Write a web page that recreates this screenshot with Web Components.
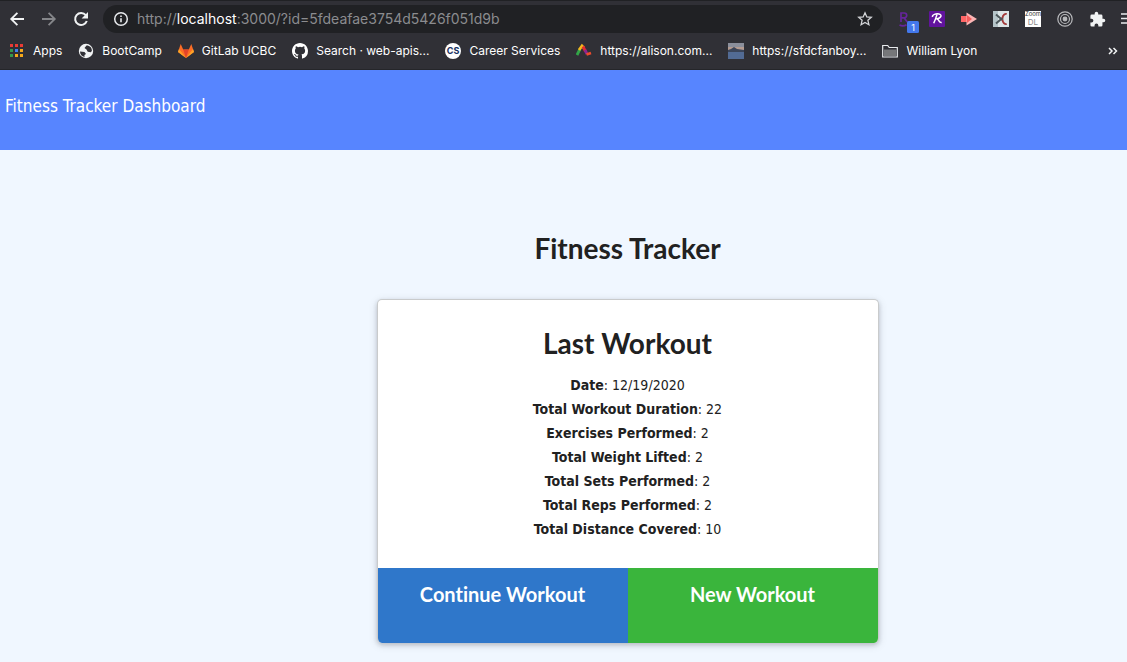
<!DOCTYPE html>
<html lang="en">
<head>
<meta charset="utf-8">
<title>Fitness Tracker Dashboard</title>
<style>
html, body { margin: 0; min-height: 100%; }
body { background: #f0f7ff; color: #212121; font: 14px/24px "DejaVu Sans Condensed", "Noto Sans", sans-serif; font-variant-ligatures: none; overflow-x: hidden; }
</style>
</head>
<body>
<browser-chrome></browser-chrome>
<site-nav><a href="#dashboard">Fitness Tracker Dashboard</a></site-nav>
<workout-page></workout-page>

<script>
const define = (name, html) => {
  const t = document.createElement('template');
  t.innerHTML = html;
  customElements.define(name, class extends HTMLElement {
    constructor() {
      super();
      this.attachShadow({ mode: 'open' }).append(t.content.cloneNode(true));
    }
  });
};

define('tool-button', `
<style>
:host { display: flex; flex: none; width: 32px; height: 28px; }
button { all: unset; display: flex; align-items: center; justify-content: center; width: 100%; cursor: pointer; }
</style>
<button type="button"><slot></slot></button>`);

define('address-bar', `
<style>
:host { display: flex; flex: 1; min-width: 0; align-items: center; height: 28px; padding: 0 10px; gap: 8px;
  box-sizing: border-box; border-radius: 14px; background: #202124; color: #8b8c8f; font: 14px/20px Inter, sans-serif; }
svg { flex: none; }
.url { flex: 1; min-width: 0; white-space: nowrap; overflow: hidden; }
b { font-weight: 400; color: #fff; }
</style>
<svg width="16" height="16" viewBox="0 0 16 16"><circle cx="8" cy="8" r="6.3" fill="none" stroke="#e8eaed" stroke-width="1.5"/><path d="M7.2 7.2h1.6v4H7.2zM7.2 4.4h1.6V6H7.2z" fill="#e8eaed"/></svg>
<div class="url">http://<b>localhost</b>:3000/?id=5fdeafae3754d5426f051d9b</div>
<svg width="16" height="16" viewBox="0 0 16 16"><path d="M8 1.8l1.8 4.1 4.5.4-3.4 3 1 4.4L8 11.4l-3.9 2.3 1-4.4-3.4-3 4.5-.4z" fill="none" stroke="#d4d6d9" stroke-width="1.3"/></svg>`);

define('book-mark', `
<style>
:host { display: block; flex: none; }
a { display: flex; align-items: center; gap: 8px; color: #fff; text-decoration: none; font: 12px/16px Inter, sans-serif; white-space: nowrap; }
::slotted(svg) { display: block; width: 16px; height: 16px; }
</style>
<a href="#"><slot name="icon"></slot><span><slot></slot></span></a>`);

define('browser-chrome', `
<style>
:host { display: block; height: 70px; overflow: hidden; background: #303036; border-top: 1px solid #202124; border-bottom: 1px solid #25262a; box-sizing: border-box; }
.tools { display: flex; align-items: center; margin: 4px -18px 0 1px; }
address-bar { margin: 0 6px; }
.marks { display: flex; align-items: center; gap: 16px; padding: 0 9px; height: 36px; }
.more { margin-left: auto; width: 10px; }
</style>
<div class="tools">
<tool-button aria-label="Back"><svg width="16" height="16" viewBox="0 0 16 16" fill="none" stroke="#f1f3f4" stroke-width="1.8"><path d="M15 8H2.5M8.4 1.8L2.2 8l6.2 6.2"/></svg></tool-button>
<tool-button aria-label="Forward"><svg width="16" height="16" viewBox="0 0 16 16" fill="none" stroke="#85868a" stroke-width="1.8"><path d="M1 8h12.5M7.6 1.8L13.8 8l-6.2 6.2"/></svg></tool-button>
<tool-button aria-label="Reload"><svg width="16" height="16" viewBox="0 0 16 16"><path d="M12.8 4.2A6 6 0 1 0 13.8 10" fill="none" stroke="#f1f3f4" stroke-width="2"/><path d="M15 1v6.4H8.6z" fill="#f1f3f4"/></svg></tool-button>
<address-bar></address-bar>
<tool-button aria-label="R extension"><svg width="32" height="28" viewBox="0 0 32 28"><path d="M12 17V8h3.300a2.400 2.400 0 0 1 0 4.800H12M15 12.800l3.300 4.200M10.500 20c2 1 5 1 7-.3" fill="none" stroke="#66259c" stroke-width="1.700"/><rect x="18" y="16" width="12" height="12" rx="1.500" fill="#4378ec"/><text x="24" y="25.500" text-anchor="middle" font-family="Inter" font-size="9" fill="#fff">1</text></svg></tool-button>
<tool-button aria-label="Script R extension"><svg width="16" height="16" viewBox="0 0 16 16"><rect width="16" height="16" rx="1" fill="#61139d"/><path d="M3.500 6C3 3.500 7 2.500 10 3s3 4-2.500 5c3 0 2 4 5.200 3.500M8 3.500C7 7 6 9.500 4.700 12.300" fill="none" stroke="#fff" stroke-width="1.500"/></svg></tool-button>
<tool-button aria-label="Recorder"><svg width="16" height="16" viewBox="0 0 16 16"><path d="M0 5h6v6H0z" fill="#f66"/><path d="M5.500 1.500L16 8 5.500 14.500z" fill="#fbb5b5"/><path d="M6 4l5 4-5 4z" fill="#f45c5c"/></svg></tool-button>
<tool-button aria-label="Snipping tool"><svg width="16" height="16" viewBox="0 0 16 16"><path d="M0 0h16v16H0z" fill="#dde6e8"/><path d="M0 0h5v16H0z" fill="#b5c4c9"/><path d="M3 3.500l7 6M3 12.500l7-6" stroke="#4c575b" stroke-width="2"/><path d="M9.500 7.200C9.500 4 12 2.500 13.800 3M9.500 8.800c0 3 2.500 4.700 4.300 4.200" fill="none" stroke="#a33a3a" stroke-width="1.800"/></svg></tool-button>
<tool-button aria-label="Zoom downloader"><svg width="16" height="16" viewBox="0 0 16 16"><path d="M0 0h16v16H0z" fill="#fff"/><text x="8" y="5" text-anchor="middle" font-family="Inter" font-size="6" fill="#333">Zoom</text><text x="8" y="14" text-anchor="middle" font-family="Inter" font-size="8" fill="#888">DL</text></svg></tool-button>
<tool-button aria-label="Target"><svg width="16" height="16" viewBox="0 0 16 16" fill="none" stroke="#b9babd" stroke-width="1.200"><circle cx="8" cy="8" r="7.200"/><circle cx="8" cy="8" r="4.500"/><circle cx="8" cy="8" r="1.800" fill="#b9babd"/></svg></tool-button>
<tool-button aria-label="Extensions"><svg width="17" height="17" viewBox="0 0 24 24"><path fill="#f1f3f4" d="M20.500 11H19V7a2 2 0 0 0-2-2h-4V3.500a2.500 2.500 0 0 0-5 0V5H4a2 2 0 0 0-2 2v3.800h1.500a2.700 2.700 0 0 1 0 5.400H2V20a2 2 0 0 0 2 2h3.800v-1.500a2.700 2.700 0 0 1 5.400 0V22H17a2 2 0 0 0 2-2v-4h1.500a2.500 2.500 0 0 0 0-5z"/></svg></tool-button>
<tool-button aria-label="Menu"><svg width="16" height="16" viewBox="0 0 16 16" fill="none" stroke="#e8eaed" stroke-width="1.500"><path d="M0 3h16M0 7.500h16M0 12h16"/></svg></tool-button>
</div>
<div class="marks">
<book-mark><svg slot="icon" viewBox="0 0 16 16"><path d="M1 1h3v3H1zM6 1h3v3H6zM11 1h3v3h-3z" fill="#ea3b35"/><path d="M1 6h3v3H1zM1 11h3v3H1z" fill="#34984f"/><path d="M6 6h3v3H6z" fill="#3d7ff0"/><path d="M11 6h3v3h-3zM6 11h3v3H6zM11 11h3v3h-3z" fill="#f6a91b"/></svg>Apps</book-mark>
<book-mark><svg slot="icon" viewBox="0 0 16 16"><circle cx="8" cy="8" r="7.200" fill="#f1f3f4"/><path d="M8.500 2.500L6.500 5l2 1.500 1.200 2.300 3.200.4 1-1.500C14 5 12 2.500 8.500 2.500zM2 8.500l4.500.5L8 11l-1.500 1v2C4 13.500 2 11.500 2 8.500z" fill="#303036"/></svg>BootCamp</book-mark>
<book-mark><svg slot="icon" viewBox="0 0 16 16"><path d="M8 15L0 9l2.700-8 2.500 5.500h5.600L13.300 1 16 9z" fill="#fc6d26"/><path d="M8 15L5.200 6.500h5.600z" fill="#e24329"/><path d="M8 15L0 9l1-3zM8 15l8-6-1-3z" fill="#fca326"/></svg>GitLab UCBC</book-mark>
<book-mark><svg slot="icon" viewBox="0 0 16 16"><path fill="#fff" d="M8 0C3.580 0 0 3.580 0 8c0 3.540 2.290 6.530 5.470 7.590.4.070.55-.17.55-.38 0-.19-.01-.82-.01-1.490-2.010.37-2.530-.49-2.690-.94-.09-.23-.48-.94-.82-1.130-.28-.15-.68-.52-.01-.53.63-.01 1.080.58 1.230.82.72 1.210 1.870.87 2.330.66.07-.52.28-.87.51-1.070-1.780-.2-3.640-.89-3.640-3.950 0-.87.31-1.590.82-2.150-.08-.2-.36-1.020.08-2.120 0 0 .67-.21 2.200.82a7.600 7.600 0 0 1 4 0c1.530-1.040 2.200-.82 2.200-.82.44 1.100.16 1.920.08 2.120.51.56.82 1.270.82 2.150 0 3.070-1.870 3.750-3.650 3.950.29.25.54.73.54 1.480 0 1.070-.01 1.930-.01 2.200 0 .21.150.46.550.38A8 8 0 0 0 16 8c0-4.420-3.580-8-8-8z"/></svg>Search · web-apis...</book-mark>
<book-mark><svg slot="icon" viewBox="0 0 16 16"><circle cx="8" cy="8" r="8" fill="#fff"/><text x="8" y="11.200" text-anchor="middle" font-family="Inter" font-weight="700" font-size="9" fill="#17305f">CS</text></svg>Career Services</book-mark>
<book-mark><svg slot="icon" viewBox="0 0 16 16" fill="none" stroke-width="2.800"><path d="M1 12l3-6" stroke="#32a548"/><path d="M3 7l3-4 2 2" stroke="#f6b51d"/><path d="M7 3.500l2.500 5" stroke="#e32b32"/><path d="M9 7l2 4" stroke="#8c2590"/><path d="M10.500 11.500L15 10" stroke="#ef4a2c"/></svg>https://alison.com...</book-mark>
<book-mark><svg slot="icon" viewBox="0 0 16 16"><path d="M0 0h16v16H0z" fill="#8b8f9b"/><path d="M0 4h16v3H0z" fill="#b39b91"/><path d="M0 7l3-1 3-2 3 2 7 1v2H0z" fill="#3b4559"/><path d="M0 9h16v7H0z" fill="#526b94"/></svg>https://sfdcfanboy...</book-mark>
<book-mark><svg slot="icon" viewBox="0 0 16 16"><path d="M.7 14V2.500h5l1.500 2h8.100V14z" fill="none" stroke="#e8eaed" stroke-width="1.200"/><path d="M2 6.500h12V13H2z" fill="#76777a"/></svg>William Lyon</book-mark>
<svg class="more" width="10" height="16" viewBox="0 0 10 16" fill="none" stroke="#f1f3f4" stroke-width="1.500"><path d="M1 5l3 3-3 3M5.500 5l3 3-3 3"/></svg>
</div>`);

define('site-nav', `
<style>
:host { display: block; height: 80px; padding: 24px 5px; box-sizing: border-box; background: #5785ff; font-size: 17px; }
::slotted(a) { color: #fff; text-decoration: none; }
</style>
<slot></slot>`);

define('workout-stat', `
<style>:host { display: block; } b { font-weight: 700; }</style>
<b><slot name="label"></slot></b>: <slot></slot>`);

define('workout-card', `
<style>
:host { display: block; width: 500px; max-width: 100%; border: 1px solid #c9cbcc; border-bottom: 0; border-radius: 5px; overflow: hidden; background: #fff;
  box-shadow: 0 2px 4px rgba(34,36,38,.2), 0 2px 10px rgba(34,36,38,.12); text-align: center; }
.body { padding: 26px 16px 27px; }
h2 { margin: 0 0 13px; font: 700 28px/34px Lato, sans-serif; font-variant-ligatures: none; }
.actions { display: grid; grid-template-columns: 1fr 1fr; }
button { all: unset; box-sizing: border-box; height: 75px; padding: 13px 0 36px; text-align: center; color: #fff; font: 700 20px/26px Lato, sans-serif; font-variant-ligatures: none; cursor: pointer; background: #2f77ca; }
.new { background: #3ab53c; }
</style>
<div class="body">
<h2>Last Workout</h2>
<workout-stat><span slot="label">Date</span>12/19/2020</workout-stat>
<workout-stat><span slot="label">Total Workout Duration</span>22</workout-stat>
<workout-stat><span slot="label">Exercises Performed</span>2</workout-stat>
<workout-stat><span slot="label">Total Weight Lifted</span>2</workout-stat>
<workout-stat><span slot="label">Total Sets Performed</span>2</workout-stat>
<workout-stat><span slot="label">Total Reps Performed</span>2</workout-stat>
<workout-stat><span slot="label">Total Distance Covered</span>10</workout-stat>
</div>
<div class="actions"><button type="button">Continue Workout</button><button type="button" class="new">New Workout</button></div>`);

define('workout-page', `
<style>
:host { display: flex; flex-direction: column; align-items: center; padding: 81px 0 19px 128px; }
h1 { margin: 0 0 34px; font: 700 28px/34px Lato, sans-serif; font-variant-ligatures: none; }
</style>
<h1>Fitness Tracker</h1>
<workout-card></workout-card>`);
</script>
</body>
</html>
